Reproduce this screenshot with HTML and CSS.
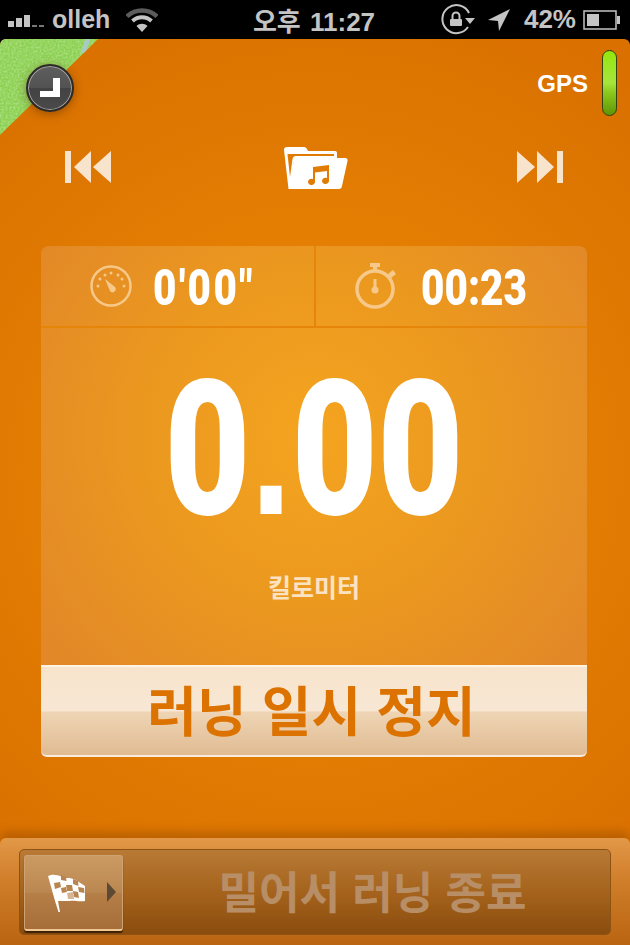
FILE: index.html
```html
<!DOCTYPE html>
<html lang="ko">

<head>
    <meta charset="UTF-8">
    <meta name="viewport" content="width=device-width, initial-scale=1.0">
    <title>러닝</title>
    <link rel="stylesheet" href="styles.css">
</head>

<body>
    <div class="phone">
        <header class="status">
            <div class="status-left">
                <svg class="signal" width="36" height="14" viewBox="0 0 36 14">
                    <rect x="0" y="8" width="6" height="6" fill="#c4c4c4"/>
                    <rect x="8" y="5" width="6" height="9" fill="#c4c4c4"/>
                    <rect x="16" y="2" width="6" height="12" fill="#c4c4c4"/>
                    <rect x="24" y="12" width="5" height="2" fill="#777"/>
                    <rect x="31" y="12" width="5" height="2" fill="#777"/>
                </svg>
                <span class="carrier">olleh</span>
                <svg class="wifi" width="32" height="24" viewBox="0 0 32 24">
                    <path d="M1 8.5 C9 0.5 23 0.5 31 8.5" fill="none" stroke="#5c5c5c" stroke-width="4.5"/>
                    <path d="M6.5 13 C12 8 20 8 25.5 13" fill="none" stroke="#c4c4c4" stroke-width="4"/>
                    <path d="M16 24 L10.5 18 C13.5 15 18.5 15 21.5 18 Z" fill="#c4c4c4"/>
                </svg>
            </div>
            <div class="clock-text">오후 11:27</div>
            <div class="status-right">
                <svg class="rotation-lock" width="35" height="32" viewBox="0 0 35 32">
                    <path d="M28 23 A14 14 0 1 1 29 9" fill="none" stroke="#c4c4c4" stroke-width="2"/>
                    <path d="M25 14 L35 14 L30 20 Z" fill="#c4c4c4"/>
                    <rect x="10" y="15" width="12" height="7" rx="1" fill="#c4c4c4"/>
                    <path d="M12.500 15 V12 A3.500 3.500 0 0 1 19.500 12 V15" fill="none" stroke="#c4c4c4" stroke-width="2"/>
                </svg>
                <svg class="arrow" width="22" height="22" viewBox="0 0 22 22">
                    <path d="M22 0 L0 11 L10 12 L11 22 Z" fill="#c4c4c4"/>
                </svg>
                <span class="battery-text">42%</span>
                <svg width="37" height="20" viewBox="0 0 37 20">
                    <rect x="1" y="1" width="32" height="18" fill="none" stroke="#c4c4c4" stroke-width="1.500"/>
                    <rect x="4" y="4" width="12" height="12" fill="#c4c4c4"/>
                    <rect x="34" y="6" width="3" height="8" fill="#c4c4c4"/>
                </svg>
            </div>
        </header>

        <main class="app">
            <div class="map-corner">
                <svg width="98" height="96">
                    <filter id="grass">
                        <feTurbulence type="fractalNoise" baseFrequency="0.5" numOctaves="2"/>
                        <feColorMatrix values="0 0 0 0 0.66  0 0 0 0 0.90  0 0 0 0 0.48  0 0 0 1 -0.35"/>
                    </filter>
                    <rect width="98" height="96" filter="url(#grass)"/>
                </svg>
                <div class="map-river"></div>
            </div>
            <button class="history-btn">
                <svg width="20" height="20" viewBox="0 0 20 20">
                    <path d="M13 0 H20 V19 H0 V13 H13 Z" fill="#fff"/>
                </svg>
            </button>

            <div class="gps-row">
                <span class="gps-label">GPS</span>
                <span class="gps-pill"></span>
            </div>

            <div class="media-row">
                <svg width="46" height="32" viewBox="0 0 46 32">
                    <rect x="0" y="0" width="6" height="32" fill="#f8e3cc"/>
                    <path d="M9 16 L26 0 V32 Z M28 16 L46 0 V32 Z" fill="#f8e3cc"/>
                </svg>
                <svg class="folder" width="66" height="44" viewBox="0 0 66 44">
                    <path fill-rule="evenodd" d="M2 5 Q2 2 5 2 H22 Q24 2 25 4 L26 6 H53 Q55 6 55 8 V16 H12 L8 44 H6.500 Z M5.500 9 L8 32 L10.500 14 Q11 11 14 11 H52 V9 Z" fill="#fff"/>
                    <path d="M14 13 H63 Q66 13 65.500 16 L60 41 Q59.500 44 57 44 H7 L12 15 Q12.500 13 14 13 Z" fill="#fff"/>
                    <path fill-rule="evenodd" d="M31 22 L47 20 V36 A3.500 3.200 0 1 1 45 33 V26 L33 27.500 V37 A3.500 3.200 0 1 1 31 34 Z" fill="#e07c04"/>
                </svg>
                <svg width="46" height="32" viewBox="0 0 46 32">
                    <rect x="40" y="0" width="6" height="32" fill="#f8e3cc"/>
                    <path d="M37 16 L20 0 V32 Z M18 16 L0 0 V32 Z" fill="#f8e3cc"/>
                </svg>
            </div>

            <section class="panel">
                <div class="stats">
                    <div class="stat stat-pace">
                        <svg width="42" height="42" viewBox="0 0 42 42">
                            <circle cx="21" cy="21" r="19.500" fill="none" stroke="#f6c98a" stroke-width="2.500"/>
                            <g fill="#f6c98a">
                                <circle cx="8" cy="21" r="1.500"/>
                                <circle cx="10" cy="14" r="1.500"/>
                                <circle cx="15" cy="10" r="1.500"/>
                                <circle cx="21" cy="8" r="1.500"/>
                                <circle cx="28" cy="10" r="1.500"/>
                                <circle cx="32" cy="14" r="1.500"/>
                                <circle cx="34" cy="21" r="1.500"/>
                                <path d="M15 14 L25 22 A3 3 0 0 1 20 26 Z"/>
                            </g>
                        </svg>
                        <span class="stat-num pace-num">0'00"</span>
                    </div>
                    <div class="stat stat-time">
                        <svg width="42" height="46" viewBox="0 0 42 46">
                            <circle cx="20" cy="26" r="18" fill="none" stroke="#f6c98a" stroke-width="3.500"/>
                            <g fill="#f6c98a">
                                <rect x="15" y="0" width="10" height="4"/>
                                <rect x="18" y="4" width="4" height="5"/>
                                <path d="M33 11 L38 7 L41 11 L36 15 Z"/>
                                <rect x="18.500" y="16" width="3" height="10"/>
                                <circle cx="20" cy="27" r="3.500"/>
                            </g>
                        </svg>
                        <span class="stat-num">00:23</span>
                    </div>
                </div>
                <div class="distance">
                    <div class="distance-num">0<span class="dot">.</span>00</div>
                    <div class="distance-unit">킬로미터</div>
                </div>
                <button class="pause-btn">러닝 일시 정지</button>
            </section>

            <footer class="slide-bar">
                <div class="slot">
                    <div class="thumb">
                        <svg width="42" height="42" viewBox="0 0 42 42">
                            <path d="M1 4 C9 0 15 6 21 6 C26 6 29 8 38 14 L38 29 C31 30 28 28 22 29 C17 29 14 29 11 29 L13 40 L11.500 40 L8 29 Z" fill="#fff"/>
                            <g fill="#b88550">
                                <path d="M7 11 L13 10 L14 15 L8 17 Z"/>
                                <path d="M19 13 L25 13 L26 19 L20 19 Z"/>
                                <path d="M31 15 L37 16 L37.500 21 L32 20 Z"/>
                                <path d="M14 3 L19 5 L19.500 9 L14 8 Z"/>
                                <path d="M26 7 L31 9 L31.500 14 L26 12 Z"/>
                                <path d="M14 16 L19 15 L20 20 L15 21 Z"/>
                                <path d="M26 19 L31 20 L32 26 L27 25 Z"/>
                                <path d="M20 21 L26 20 L27 27 L21 27 Z" opacity="0.600"/>
                            </g>
                        </svg>
                    </div>
                    <span class="slide-arrow"></span>
                    <span class="slide-label">밀어서 러닝 종료</span>
                </div>
            </footer>
        </main>
    </div>
</body>

</html>
```

FILE: styles.css
```css
body {
    margin: 0;
    background: #000;
    font-family: "Liberation Sans", "Noto Sans CJK KR", sans-serif;
}

.phone {
    width: 630px;
    height: 945px;
    display: flex;
    flex-direction: column;
    overflow: hidden;
}

/* status bar */
.status {
    height: 39px;
    flex: none;
    display: grid;
    grid-template-columns: 1fr auto 1fr;
    align-items: center;
    padding: 0 10px 0 8px;
    color: #c4c4c4;
    font-size: 25px;
    background: #000;
}

.status-left {
    display: flex;
    align-items: center;
}

.carrier {
    margin-left: 8px;
    font-weight: bold;
}

.wifi {
    margin-left: 16px;
}

.clock-text {
    font-weight: bold;
    font-size: 26px;
    word-spacing: 2px;
}

.status-right {
    display: flex;
    align-items: center;
    justify-content: flex-end;
}

.rotation-lock {
    margin-right: 13px;
}

.arrow {
    margin-right: 14px;
}

.battery-text {
    font-weight: bold;
    font-size: 26px;
    margin-right: 7px;
}

/* main orange screen */
.app {
    flex: 1;
    position: relative;
    display: flex;
    flex-direction: column;
    border-radius: 6px 6px 0 0;
    overflow: hidden;
    background: radial-gradient(circle 500px at 315px 430px, #ec9414 0%, #e47f03 45%, #d97000 100%);
}

.map-corner {
    position: absolute;
    left: 0;
    top: 0;
    width: 98px;
    height: 96px;
    background: #8bd052;
    clip-path: polygon(0 0, 100% 0, 0 100%);
}

.map-river {
    position: absolute;
    left: 83px;
    top: 0;
    width: 5px;
    height: 14px;
    background: #a9c9c4;
    transform: skewX(-18deg);
}

.history-btn {
    position: absolute;
    left: 26px;
    top: 25px;
    width: 48px;
    height: 48px;
    padding: 0;
    border: 2px solid #2e2a26;
    border-radius: 50%;
    background: linear-gradient(#5e5e5e 0%, #525252 50%, #434343 51%, #4a4a4a 100%);
    box-shadow: inset 0 0 0 1px #a5a5a5, 0 2px 10px rgba(90, 45, 0, 0.5);
    display: flex;
    align-items: center;
    justify-content: center;
}

.gps-row {
    flex: none;
    height: 66px;
    margin-top: 11px;
    padding-right: 13px;
    display: flex;
    align-items: center;
    justify-content: flex-end;
    gap: 14px;
}

.gps-label {
    color: #fff;
    font-weight: bold;
    font-size: 24px;
    margin-top: 2px;
}

.gps-pill {
    width: 13px;
    height: 64px;
    border: 1px solid #33400f;
    border-radius: 8px;
    background: linear-gradient(#93e60f 0%, #a6e53c 50%, #8bc81e 65%, #5f9606 100%);
}

.media-row {
    flex: none;
    height: 44px;
    margin-top: 29px;
    padding: 0 67px 0 65px;
    display: flex;
    align-items: center;
    justify-content: space-between;
}

.folder {
    margin-left: 2px;
}

/* stats panel */
.panel {
    flex: none;
    width: 546px;
    margin: 57px 0 0 41px;
    border-radius: 8px;
    background: radial-gradient(circle 340px at 274px 190px, #f5a41f 0%, #eb981f 50%, #e28828 100%);
}

.stats {
    display: grid;
    grid-template-columns: 275px 271px;
    height: 80px;
    border-bottom: 2px solid #e58509;
}

.stat {
    display: flex;
    align-items: center;
    overflow: hidden;
}

.stat-pace {
    padding-left: 49px;
    gap: 21px;
    border-right: 2px solid #e58509;
}

.stat-time {
    padding-left: 39px;
    gap: 24px;
}

.stat-num {
    color: #fff;
    font-family: Roboto, "Liberation Sans", sans-serif;
    font-weight: 900;
    font-size: 50px;
    line-height: 1;
    white-space: nowrap;
    transform: scaleX(0.81);
    transform-origin: left center;
    margin-top: 4px;
}

.pace-num {
    letter-spacing: 3px;
}

.distance {
    height: 337px;
    text-align: center;
    overflow: hidden;
}

.distance-num {
    color: #fff;
    font-family: Roboto, "Liberation Sans", sans-serif;
    font-weight: 900;
    font-size: 190px;
    line-height: 1;
    margin-top: 25px;
    transform: scaleX(0.78);
}

.dot {
    font-family: "Liberation Sans", sans-serif;
    font-weight: bold;
}

.distance-unit {
    color: #fbe3c2;
    font-family: "Noto Sans CJK KR", sans-serif;
    font-weight: bold;
    font-size: 25px;
    margin-top: 24px;
}

.pause-btn {
    display: block;
    width: 100%;
    height: 92px;
    padding: 0 5px 4px 0;
    border: 0;
    border-top: 2px solid #fff3e3;
    border-bottom: 2px solid #f8ecdc;
    border-radius: 0 0 6px 6px;
    color: #dc7200;
    font-family: "Noto Sans CJK KR", sans-serif;
    font-weight: bold;
    font-size: 54px;
    line-height: 1;
    background: linear-gradient(#f8e4cc 0%, #f7e7d4 50%, #efd5b5 51%, #e0bb92 100%);
}

/* slide to finish */
.slide-bar {
    position: absolute;
    left: 0;
    right: 0;
    bottom: 0;
    height: 107px;
    padding: 11px 19px 10px;
    box-sizing: border-box;
    border-radius: 6px 6px 0 0;
    background: linear-gradient(#e29848 0%, #d07e2a 40%, #b96410 100%);
    box-shadow: 0 -6px 10px rgba(120, 60, 0, 0.35);
}

.slot {
    position: relative;
    width: 592px;
    height: 86px;
    box-sizing: border-box;
    padding: 2px 4px 0;
    display: flex;
    align-items: center;
    border: 1px solid #8d5312;
    border-radius: 5px;
    background: linear-gradient(#b87a36 0%, #a5631c 50%, #8a4c0e 100%);
}

.thumb {
    flex: none;
    width: 99px;
    height: 76px;
    display: flex;
    align-items: center;
    justify-content: center;
    padding-right: 12px;
    box-sizing: border-box;
    border: 1px solid #cfa274;
    border-bottom: 2px solid #f0c590;
    border-radius: 3px;
    background: linear-gradient(#cb9a63 0%, #bb8750 50%, #b67f48 51%, #a56d38 100%);
    box-shadow: 0 2px 1px #3d2105;
}

.slide-arrow {
    position: absolute;
    left: 87px;
    top: 32px;
    border-left: 9px solid #5d4a35;
    border-top: 10px solid transparent;
    border-bottom: 10px solid transparent;
}

.slide-label {
    flex: 1;
    text-align: center;
    color: #b88e66;
    font-family: "Noto Sans CJK KR", sans-serif;
    font-weight: bold;
    font-size: 44px;
    line-height: 1;
    padding-left: 16px;
    padding-bottom: 6px;
}
```
